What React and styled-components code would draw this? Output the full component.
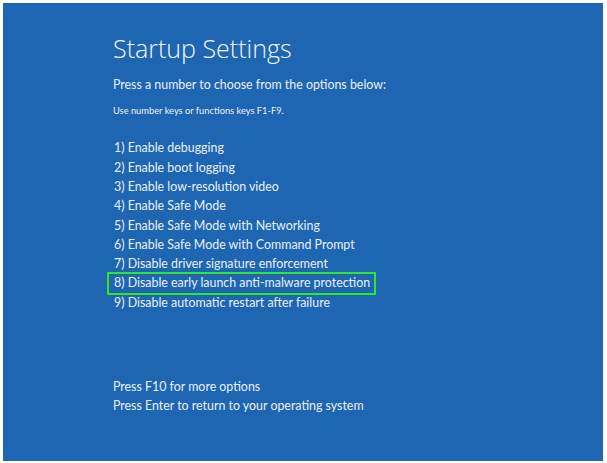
import React from 'react';
import styled, { createGlobalStyle } from 'styled-components';

const GlobalStyle = createGlobalStyle`
  html, body {
    margin: 0;
    padding: 0;
    background: #ffffff;
  }
  body {
    font-family: Lato, 'Open Sans', sans-serif;
  }
`;

const Screen = styled.div`
  box-sizing: border-box;
  width: 600px;
  height: 458px;
  margin: 3px 0 0 3px;
  background: #1f66b2;
  color: #eaf0f8;
  padding: 28px 0 0 110px;
  display: flex;
  flex-direction: column;
`;

const Title = styled.h1`
  margin: 0;
  font-family: 'Open Sans', sans-serif;
  font-size: 25px;
  font-weight: 300;
  line-height: 34px;
  color: #f4f7fb;
`;

const Prompt = styled.p`
  margin: ${(p) => p.$top || 0}px 0 0 0;
  font-size: ${(p) => p.$size || 12.4}px;
  line-height: ${(p) => p.$line || 19.4}px;
`;

const OptionList = styled.ol`
  list-style: none;
  margin: 20px 0 0 0;
  padding: 0;
  display: flex;
  flex-direction: column;
`;

const Option = styled.li`
  position: relative;
  font-size: 12.4px;
  line-height: 19.3px;
  padding-left: 1px;
`;

const Highlight = styled.span`
  position: absolute;
  left: -6px;
  top: -1.5px;
  width: 269px;
  height: 23px;
  box-sizing: border-box;
  border: 2px solid #2fe62a;
`;

const Footer = styled.div`
  margin-top: 65px;
  display: flex;
  flex-direction: column;
`;

const options = [
  'Enable debugging',
  'Enable boot logging',
  'Enable low-resolution video',
  'Enable Safe Mode',
  'Enable Safe Mode with Networking',
  'Enable Safe Mode with Command Prompt',
  'Disable driver signature enforcement',
  'Disable early launch anti-malware protection',
  'Disable automatic restart after failure',
];

export default function App() {
  return (
    <>
      <GlobalStyle />
      <Screen>
        <Title>Startup Settings</Title>
        <Prompt $top={10}>Press a number to choose from the options below:</Prompt>
        <Prompt $top={10} $size={9.3} $line={14}>
          Use number keys or functions keys F1-F9.
        </Prompt>
        <OptionList>
          {options.map((text, i) => (
            <Option key={text}>
              {i + 1}) {text}
              {i === 7 && <Highlight />}
            </Option>
          ))}
        </OptionList>
        <Footer>
          <Prompt>Press F10 for more options</Prompt>
          <Prompt>Press Enter to return to your operating system</Prompt>
        </Footer>
      </Screen>
    </>
  );
}
